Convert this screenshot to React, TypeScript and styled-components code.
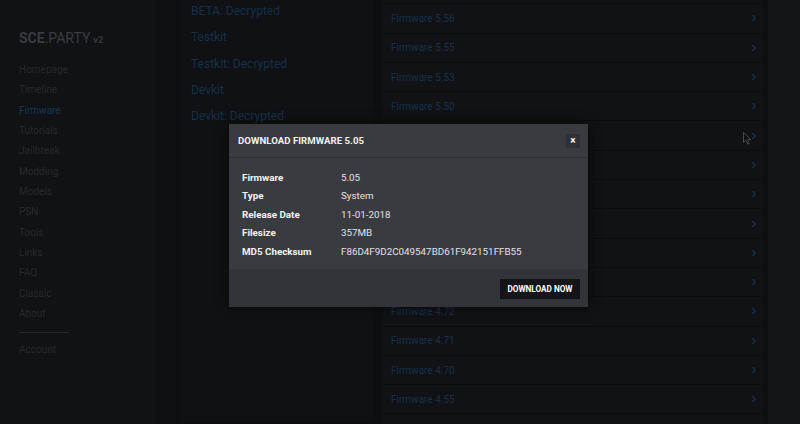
import React from 'react';
import styled, { createGlobalStyle } from 'styled-components';
import { ChevronRight } from 'lucide-react';

const GlobalStyle = createGlobalStyle`
  html, body {
    margin: 0;
    padding: 0;
    background: #0e0f12;
    font-family: Roboto, "Liberation Sans", Arial, sans-serif;
    overflow: hidden;
  }
  * { box-sizing: border-box; }
`;

const Page = styled.div`
  position: relative;
  display: flex;
  width: 800px;
  height: 424px;
  overflow: hidden;
  background: #0e0f12;
`;

const Sidebar = styled.aside`
  width: 155px;
  flex-shrink: 0;
  background: #111215;
  padding: 31px 0 0 19px;
`;

const Logo = styled.div`
  font-size: 14px;
  line-height: 14px;
  height: 14px;
  color: #3a3b41;
  margin-bottom: 15px;
  white-space: nowrap;

  b { font-weight: 700; }
  span { font-weight: 400; }
  small {
    font-size: 9px;
    font-weight: 700;
    margin-left: 3px;
  }
`;

const NavItem = styled.div<{ $active?: boolean }>`
  font-size: 10px;
  line-height: 20.35px;
  height: 20.35px;
  color: ${p => (p.$active ? '#18374f' : '#26282d')};
`;

const NavDivider = styled.div`
  width: 50px;
  height: 1px;
  background: #26272c;
  margin: 8px 0 7px;
`;

const Middle = styled.section`
  width: 220px;
  flex-shrink: 0;
  padding: 0 2px 0 25px;
`;

const SubPanel = styled.div`
  height: 100%;
  background: #101114;
  padding: 0 0 0 11px;
  margin-top: -2px;
`;

const SubItem = styled.div`
  font-size: 12px;
  line-height: 26.3px;
  height: 26.3px;
  color: #162f48;
`;

const Content = styled.main`
  width: 393px;
  flex-shrink: 0;
  padding: 0 6px 0 8px;
`;

const RowList = styled.div`
  display: flex;
  flex-direction: column;
  margin-top: -25px;
`;

const Row = styled.div`
  display: flex;
  align-items: center;
  justify-content: space-between;
  height: 29.3px;
  padding: 0 8px;
  background: #111215;
  border-bottom: 1px solid #0c0d0f;
  font-size: 10px;
  color: #16304a;
`;

const Chevron = styled(ChevronRight)`
  color: #18314a;
  margin-right: -5px;
`;

const RightStrip = styled.div`
  flex: 1;
  background: #131417;
`;

const Modal = styled.div`
  position: absolute;
  left: 229px;
  top: 124px;
  width: 359px;
  background: #3a3b41;
  box-shadow: 0 0 10px rgba(0, 0, 0, 0.6);
`;

const ModalHeader = styled.div`
  display: flex;
  align-items: center;
  justify-content: space-between;
  height: 34px;
  padding: 0 8px 0 9px;
  border-bottom: 1px solid #303136;
`;

const ModalTitle = styled.div`
  font-size: 9.6px;
  font-weight: 700;
  color: #f2f2f2;
  letter-spacing: 0.05px;
`;

const CloseButton = styled.button`
  width: 14px;
  height: 14px;
  padding: 0;
  border: none;
  background: #303136;
  color: #ffffff;
  font-size: 10px;
  font-weight: 700;
  line-height: 14px;
  font-family: inherit;
  cursor: pointer;
`;

const ModalBody = styled.div`
  padding: 10px 13px 8px;
`;

const InfoRow = styled.div`
  display: flex;
  height: 18.5px;
  align-items: center;
  font-size: 9.8px;
`;

const InfoLabel = styled.div`
  width: 99px;
  font-weight: 700;
  color: #f4f4f4;
`;

const InfoValue = styled.div`
  color: #e2e2e4;
`;

const ModalFooter = styled.div`
  display: flex;
  justify-content: flex-end;
  padding: 10px 8px 8px;
  background: #333439;
`;

const DownloadButton = styled.button`
  height: 20px;
  width: 80px;
  padding: 0;
  border: none;
  background: #141518;
  color: #ffffff;
  font-family: inherit;
  font-size: 8.2px;
  font-weight: 700;
  cursor: pointer;
`;

const Cursor = styled.svg`
  position: absolute;
  left: 743px;
  top: 132px;
`;

const navItems = [
  'Homepage', 'Timeline', 'Firmware', 'Tutorials', 'Jailbreak', 'Modding',
  'Models', 'PSN', 'Tools', 'Links', 'FAQ', 'Classic', 'About',
];

const subItems = ['BETA: Decrypted', 'Testkit', 'Testkit: Decrypted', 'Devkit', 'Devkit: Decrypted'];

const firmwares = [
  '6.00', '5.56', '5.55', '5.53', '5.50', '5.05', '5.03', '5.01', '5.00',
  '4.74', '4.73', '4.72', '4.71', '4.70', '4.55', '4.50',
];

const details: [string, string][] = [
  ['Firmware', '5.05'],
  ['Type', 'System'],
  ['Release Date', '11-01-2018'],
  ['Filesize', '357MB'],
  ['MD5 Checksum', 'F86D4F9D2C049547BD61F942151FFB55'],
];

export default function App() {
  return (
    <>
      <GlobalStyle />
      <Page>
        <Sidebar>
          <Logo>
            <b>SCE</b><span>.PARTY</span><small>v2</small>
          </Logo>
          {navItems.map(item => (
            <NavItem key={item} $active={item === 'Firmware'}>{item}</NavItem>
          ))}
          <NavDivider />
          <NavItem>Account</NavItem>
        </Sidebar>

        <Middle>
          <SubPanel>
            {subItems.map(item => (
              <SubItem key={item}>{item}</SubItem>
            ))}
          </SubPanel>
        </Middle>

        <Content>
          <RowList>
            {firmwares.map(fw => (
              <Row key={fw}>
                <span>Firmware {fw}</span>
                <Chevron size={10} strokeWidth={3} />
              </Row>
            ))}
          </RowList>
        </Content>

        <RightStrip />

        <Modal>
          <ModalHeader>
            <ModalTitle>DOWNLOAD FIRMWARE 5.05</ModalTitle>
            <CloseButton>×</CloseButton>
          </ModalHeader>
          <ModalBody>
            {details.map(([label, value]) => (
              <InfoRow key={label}>
                <InfoLabel>{label}</InfoLabel>
                <InfoValue>{value}</InfoValue>
              </InfoRow>
            ))}
          </ModalBody>
          <ModalFooter>
            <DownloadButton>DOWNLOAD NOW</DownloadButton>
          </ModalFooter>
        </Modal>

        <Cursor width="9" height="13" viewBox="0 0 9 13">
          <path d="M0.5 0.5 L0.5 10.5 L3 8.2 L4.8 12.2 L6.3 11.5 L4.6 7.6 L8 7.6 Z" fill="#0e0f12" stroke="#55575c" strokeWidth="0.8" />
        </Cursor>
      </Page>
    </>
  );
}
